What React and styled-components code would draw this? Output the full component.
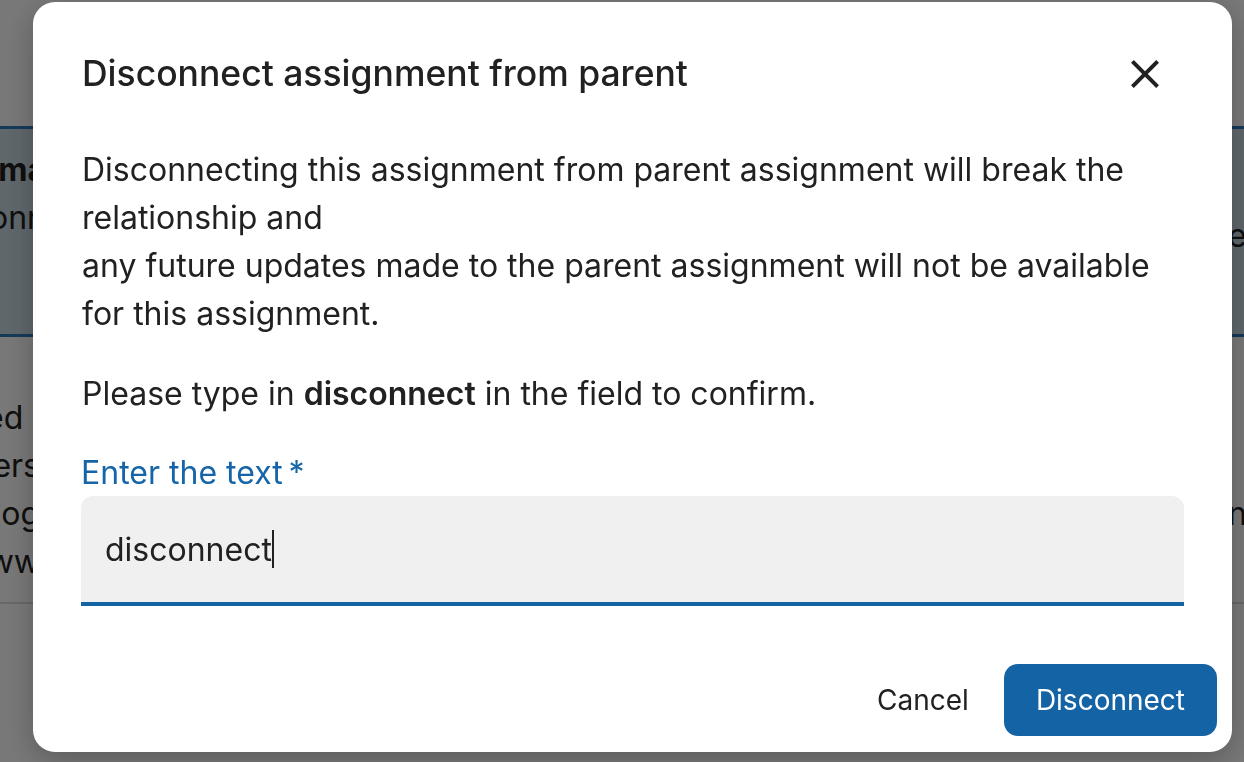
import { createGlobalStyle, styled } from "styled-components";

const GlobalStyle = createGlobalStyle`
  html, body {
    margin: 0;
    padding: 0;
    height: 100%;
    overflow: hidden;
  }
  body {
    font-family: Inter, "Noto Sans", "Liberation Sans", sans-serif;
    color: #212121;
    background: #ffffff;
  }
`;

const Page = styled.div`
  width: 1244px;
  height: 762px;
  background: #ffffff;
  font-size: 32px;
  line-height: 48px;
`;

const TopBar = styled.div`
  height: 126px;
`;

const Banner = styled.div`
  height: 188px;
  background: #cadbe4;
  border-top: 3px solid #2c7cc0;
  border-bottom: 3px solid #2c7cc0;
  display: flex;
  justify-content: space-between;
  padding-top: 17px;
`;

const LeftPeek = styled.div`
  width: ${(p) => p.$width || 46}px;
  overflow: hidden;
  display: flex;
  flex-direction: column;
  align-items: flex-end;
  white-space: nowrap;
`;

const RightPeek = styled.div`
  width: 16px;
  overflow: hidden;
  white-space: nowrap;
  padding-top: ${(p) => p.$top || 0}px;
`;

const PeekText = styled.span`
  font-weight: ${(p) => (p.$bold ? 700 : 400)};
`;

const Details = styled.div`
  display: flex;
  justify-content: space-between;
  padding: 57px 0 16px;
  border-bottom: 2px solid #dcdcdc;
`;

const Overlay = styled.div`
  position: fixed;
  inset: 0;
  background: rgba(0, 0, 0, 0.53);
  display: flex;
  justify-content: flex-start;
  align-items: flex-start;
  padding: 2px 0 0 33px;
`;

const Dialog = styled.div`
  width: 1199px;
  background: #ffffff;
  border-radius: 22px;
  box-shadow: 0 8px 30px rgba(0, 0, 0, 0.25);
  display: flex;
  flex-direction: column;
`;

const Header = styled.div`
  display: flex;
  align-items: center;
  justify-content: space-between;
  padding: 48px 63px 0 49px;
`;

const Title = styled.h2`
  margin: 0;
  font-size: 35.5px;
  line-height: 48px;
  font-weight: 500;
  color: #212121;
`;

const CloseButton = styled.button`
  border: none;
  background: none;
  padding: 0;
  width: 48px;
  height: 48px;
  display: flex;
  align-items: center;
  justify-content: center;
  color: #212121;
  cursor: pointer;
`;

const Body = styled.div`
  padding: 48px 48px 0 49px;
`;

const Paragraph = styled.p`
  margin: 0 0 32px;
  font-size: 32px;
  line-height: 48px;
  color: #212121;

  strong {
    font-weight: 600;
  }
`;

const Label = styled.div`
  font-size: 32px;
  line-height: 46px;
  color: #1565a8;
  margin-left: -1px;
`;

const Field = styled.div`
  margin-left: -1px;
  height: 106px;
  background: #f0f0f0;
  border-radius: 12px 12px 0 0;
  border-bottom: 4px solid #1463a5;
  display: flex;
  align-items: center;
  padding: 0 24px;
  font-size: 32px;
  color: #212121;
`;

const Caret = styled.span`
  display: inline-block;
  width: 2px;
  height: 38px;
  background: #212121;
`;

const Footer = styled.div`
  display: flex;
  justify-content: flex-end;
  align-items: center;
  gap: 4px;
  padding: 58px 15px 16px;
`;

const Button = styled.button`
  font-family: inherit;
  font-size: 28px;
  height: 72px;
  padding: 0 ${(p) => (p.$primary ? 32 : 31)}px;
  border: none;
  border-radius: 14px;
  cursor: pointer;
  background: ${(p) => (p.$primary ? "#1463a5" : "transparent")};
  color: ${(p) => (p.$primary ? "#ffffff" : "#212121")};
`;

const CloseIcon = () => (
  <svg width="48" height="48" viewBox="0 0 24 24" fill="currentColor">
    <path d="M19 6.41 17.59 5 12 10.59 6.41 5 5 6.41 10.59 12 5 17.59 6.41 19 12 13.41 17.59 19 19 17.59 13.41 12z" />
  </svg>
);

export default function App() {
  return (
    <>
      <GlobalStyle />
      <Page>
        <TopBar />
        <Banner>
          <LeftPeek>
            <PeekText $bold>Informa</PeekText>
            <PeekText>Conn</PeekText>
          </LeftPeek>
          <RightPeek $top={66}>
            <PeekText>e</PeekText>
          </RightPeek>
        </Banner>
        <Details>
          <LeftPeek $width={40}>
            <PeekText>Updated l</PeekText>
            <PeekText>Users</PeekText>
            <PeekText>Catalog</PeekText>
            <PeekText>www</PeekText>
          </LeftPeek>
          <RightPeek $top={96}>
            <PeekText>nc</PeekText>
          </RightPeek>
        </Details>
      </Page>
      <Overlay>
        <Dialog role="dialog" aria-modal="true">
          <Header>
            <Title>Disconnect assignment from parent</Title>
            <CloseButton aria-label="Close">
              <CloseIcon />
            </CloseButton>
          </Header>
          <Body>
            <Paragraph>
              Disconnecting this assignment from parent assignment will break the relationship and
              <br />
              any future updates made to the parent assignment will not be available for this assignment.
            </Paragraph>
            <Paragraph>
              Please type in <strong>disconnect</strong> in the field to confirm.
            </Paragraph>
            <Label>Enter the text&#8201;*</Label>
            <Field>
              <span>disconnect</span>
              <Caret />
            </Field>
          </Body>
          <Footer>
            <Button>Cancel</Button>
            <Button $primary>Disconnect</Button>
          </Footer>
        </Dialog>
      </Overlay>
    </>
  );
}
